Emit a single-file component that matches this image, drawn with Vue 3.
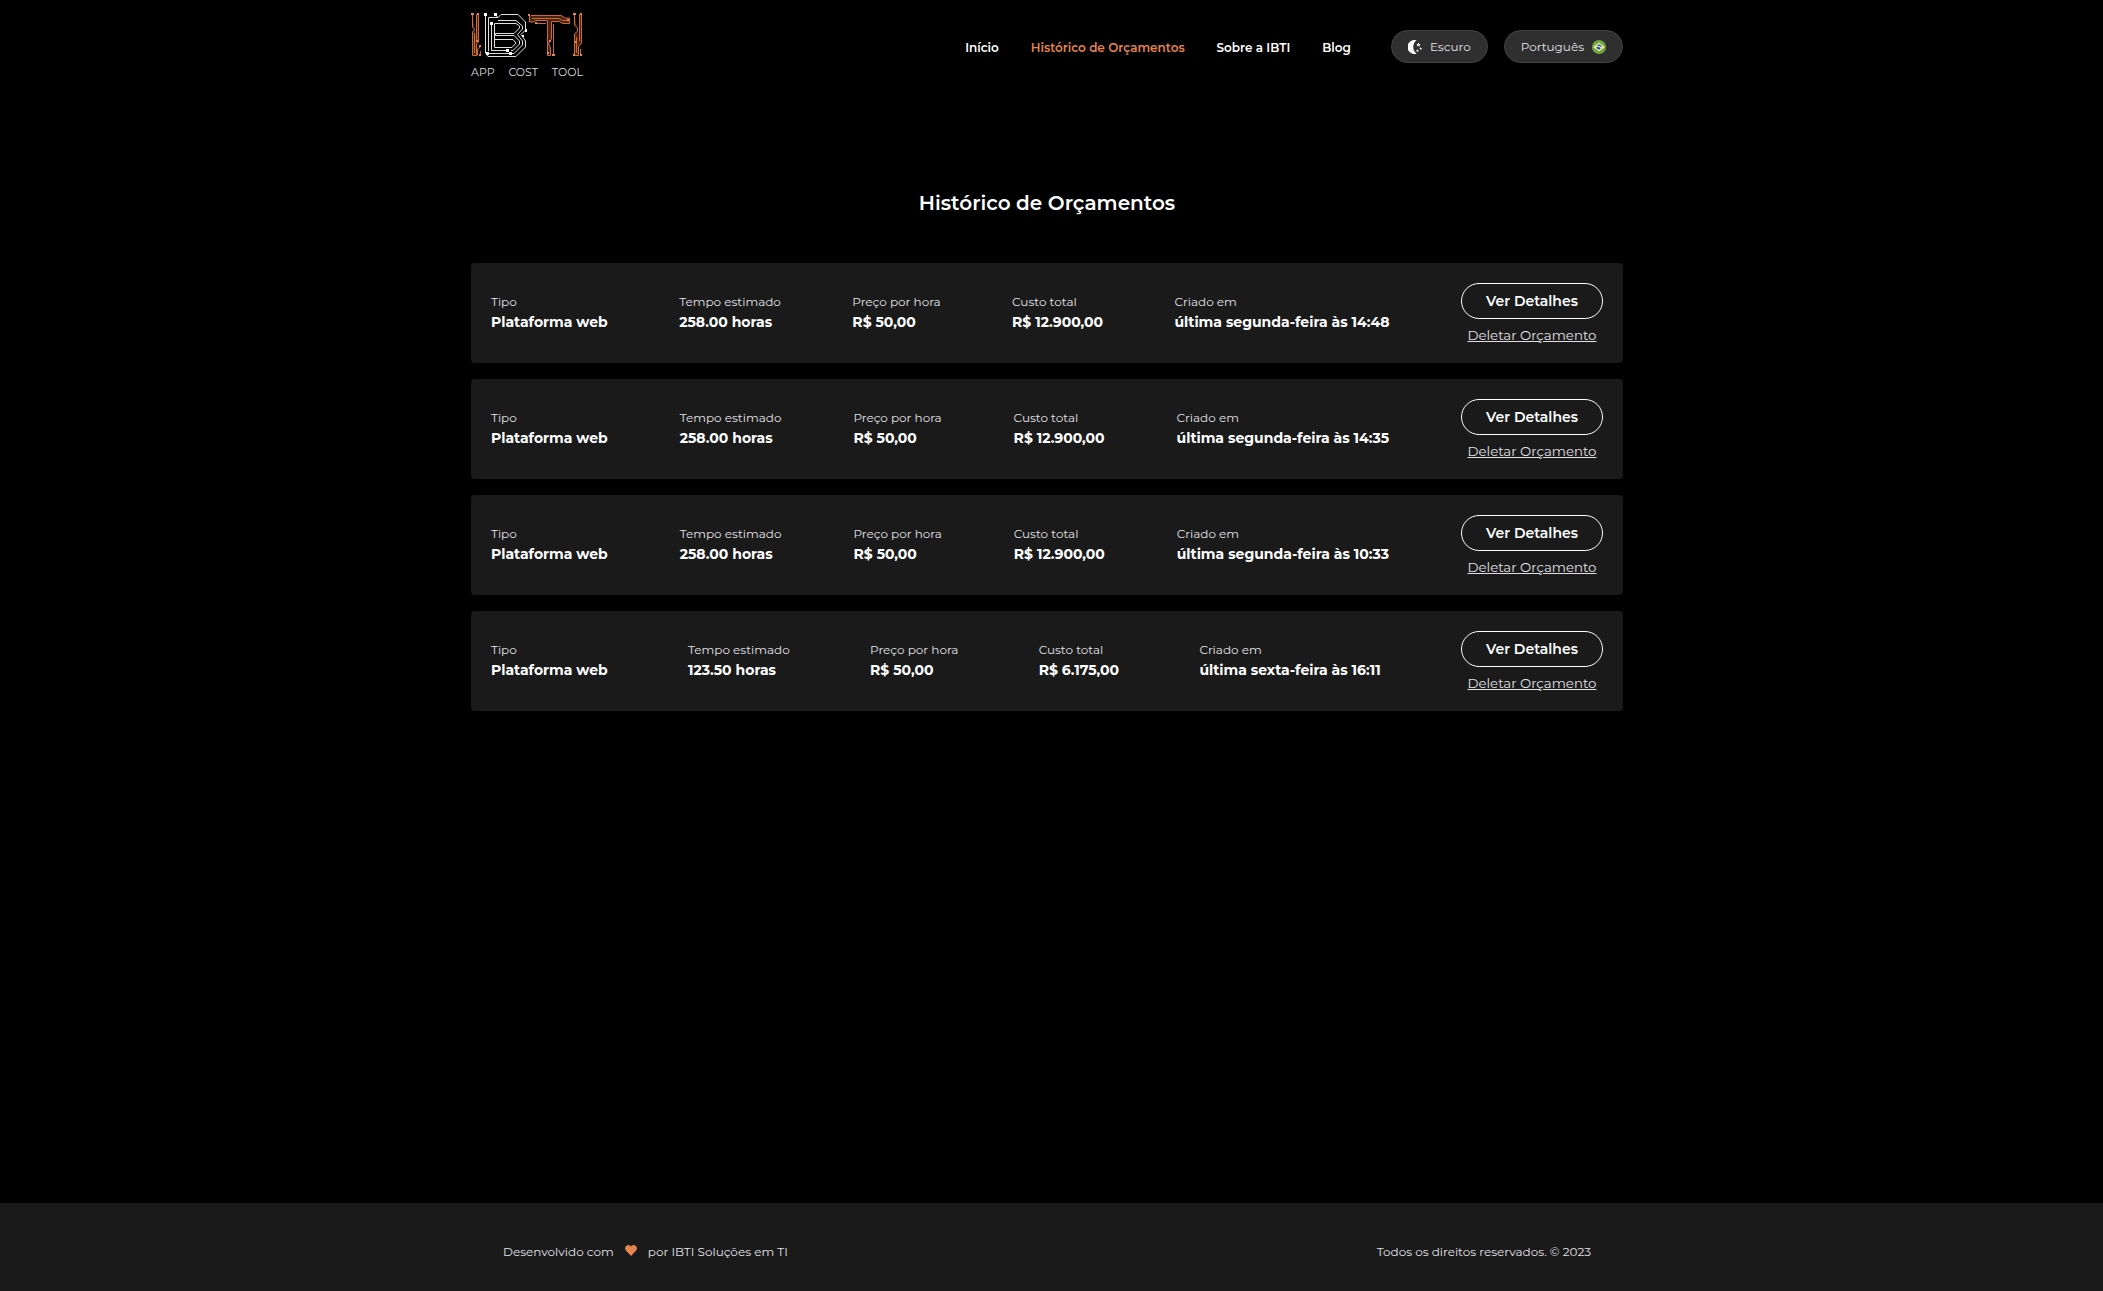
<script setup>
const links = [
  { label: 'Início' },
  { label: 'Histórico de Orçamentos', active: true },
  { label: 'Sobre a IBTI' },
  { label: 'Blog' },
]

const budget = (hours, total, created) => [
  { label: 'Tipo', value: 'Plataforma web' },
  { label: 'Tempo estimado', value: `${hours} horas` },
  { label: 'Preço por hora', value: 'R$ 50,00' },
  { label: 'Custo total', value: `R$ ${total}` },
  { label: 'Criado em', value: created },
]

const budgets = [
  budget('258.00', '12.900,00', 'última segunda-feira às 14:48'),
  budget('258.00', '12.900,00', 'última segunda-feira às 14:35'),
  budget('258.00', '12.900,00', 'última segunda-feira às 10:33'),
  budget('123.50', '6.175,00', 'última sexta-feira às 16:11'),
]
</script>

<template>
  <div class="page">
    <header class="header container">
      <a class="logo" href="#">
        <svg width="112" height="44" viewBox="0 0 112 44" fill="none" aria-hidden="true">
          <g stroke="#c96a38" stroke-width="1">
            <path fill="#4a2411" d="M1.500 1V14L3.500 16.500L1.500 19V42.500H5.500V31L7.500 29V1.500H5.500V27M3.500 20V40" />
            <path d="M6.500 42.500V36L9.500 34M9.500 42V38" />
            <path fill="#4a2411" d="M58.500 2V9H62L65 7.500H76.500V42.500H79.500V35L78 32V29L80.500 26V8.500H88L92 10.500H98.500V5H94L90 2.500H60" />
            <path d="M65 10.500H75M61 5.500H88L92 7.500H97M82.500 11V41" />
            <path fill="#4a2411" d="M103.500 1V12L106.500 15V18L103.500 21V42.500H107.500V34L110.500 30V1.500H108.500V28M105.500 24V40" />
            <path d="M109.500 42V36" />
          </g>
          <path fill="#e5844f" d="M0 0h3v2H0zM6 0h2v2H6zM5 27h2v2H5zM8 32h2v2H8zM8 41h2v2H8zM57 1h2v2h-2zM64 9h2v2h-2zM96 6h2v2h-2zM78 27h2v2h-2zM81 41h3v2h-3zM76 39h2v2h-2zM102 0h3v2h-3zM109 0h2v2h-2zM104 28h2v2h-2zM102 41h2v2h-2zM109 41h2v2h-2z" />
          <g stroke="#dedede" stroke-width="1">
            <path d="M14.500 2V40L17 43.500H45L54.500 34V28L50 21.500L54.500 17V9L47 1.500H30L27 4.500H17.500V38" />
            <path d="M27 7.500H45L51.500 13V16L46.500 21.500L51.500 28V32L43 40.500H18M20.500 12V37.500H36" />
            <path d="M40 37.500H42L48.500 31V28L43 22.500H24.500V20.500H43L48.500 15V13L45 10.500H23.500V34.500H41L45 30L42 26.500H24" />
            <path d="M24 1.500L27 4.500" />
          </g>
          <path fill="#fff" d="M13 0h3v3h-3zM23 0h3v3h-3zM19 9h3v3h-3zM54 16h2v3h-2zM51 22h2v2h-2zM35 36h3v3h-3zM15 39h3v3h-3zM38 39h3v3h-3z" />
        </svg>
        <span class="tagline"><span>APP</span> <span>COST</span> <span>TOOL</span></span>
      </a>

      <nav class="nav">
        <a v-for="link in links" :key="link.label" href="#" :class="{ active: link.active }">{{ link.label }}</a>
      </nav>

      <div class="settings">
        <button type="button" class="pill">
          <svg width="14" height="14" viewBox="0 0 14 14" fill="#fff" aria-hidden="true">
            <path d="M8.500 0.300A7 7 0 1 0 8.500 13.700A8.500 8.500 0 0 1 8.500 0.300Z" />
            <path d="M10.500 2.500l.6 1.500 1.600.1-1.200 1 .4 1.600-1.400-.9-1.400.9.4-1.600-1.200-1 1.600-.1zM12.700 7l.4.9 1 .1-.8.7.2 1-.8-.5-.9.5.3-1-.8-.7 1-.1zM9.500 9.200l.4.9 1 .1-.8.7.2 1-.8-.5-.9.5.3-1-.8-.7 1-.1z" />
          </svg>
          Escuro
        </button>
        <button type="button" class="pill">
          Português
          <svg width="14" height="14" viewBox="0 0 14 14" aria-hidden="true">
            <circle cx="7" cy="7" r="7" fill="#6da544" />
            <path d="M7 2.500L13 7L7 11.500L1 7Z" fill="#ffe07a" />
            <circle cx="7" cy="7" r="2.500" fill="#f0f0f0" />
            <path d="M5 6.800q2.500-.3 3.700 1.900A2.500 2.500 0 0 1 4.500 7.500ZM5 5.700A2.500 2.500 0 0 1 9.500 7.500Q8 5.500 5 5.700Z" fill="#0052b4" />
          </svg>
        </button>
      </div>
    </header>

    <main class="main container">
      <h1>Histórico de Orçamentos</h1>
      <ul class="list">
        <li v-for="(fields, i) in budgets" :key="i" class="card">
          <dl v-for="field in fields" :key="field.label">
            <dt>{{ field.label }}</dt>
            <dd>{{ field.value }}</dd>
          </dl>
          <div class="actions">
            <button type="button" class="details">Ver Detalhes</button>
            <button type="button" class="delete">Deletar Orçamento</button>
          </div>
        </li>
      </ul>
    </main>

    <footer class="footer">
      <div class="footer-inner container">
        <p>
          Desenvolvido com
          <svg width="12" height="11" viewBox="0 0 12 11" fill="#e5844f" role="img" aria-label="amor">
            <path d="M6 11L1 5.800C-.3 4.300-.2 2 1.100.9C2.500-.4 4.500-.2 5.600 1.100L6 1.600L6.400 1.100C7.500-.2 9.500-.4 10.900.9C12.200 2 12.300 4.300 11 5.800Z" />
          </svg>
          por IBTI Soluções em TI
        </p>
        <p>Todos os direitos reservados. © 2023</p>
      </div>
    </footer>
  </div>
</template>

<style>
body {
  background: #000;
}
</style>

<style scoped>
.page {
  --gutter: 9px;
  display: flex;
  flex-direction: column;
  min-height: 100vh;
  padding-right: var(--gutter);
  color: #fff;
  font-family: Montserrat, Inter, sans-serif;
  font-size: 12px;
}

.page * {
  box-sizing: border-box;
}

.container {
  width: 100%;
  max-width: 1152px;
  margin: 0 auto;
}

a {
  color: inherit;
  text-decoration: none;
}

button {
  color: inherit;
  font-family: inherit;
  cursor: pointer;
}

.header {
  display: flex;
  align-items: center;
  height: 93px;
}

.logo {
  display: flex;
  flex-direction: column;
  align-self: flex-start;
  gap: 8px;
  width: 112px;
  padding-top: 13px;
}

.tagline {
  display: flex;
  justify-content: space-between;
  color: #ddd;
  font-size: 11px;
  line-height: 14px;
}

.nav {
  display: flex;
  gap: 32px;
  margin: 0 40px 0 auto;
  padding-top: 1px;
  font-weight: 600;
}

.nav .active {
  color: #e5844f;
}

.settings {
  display: flex;
  gap: 16px;
}

.pill {
  display: flex;
  align-items: center;
  gap: 8px;
  height: 33px;
  padding: 0 16px;
  border: 1px solid #444;
  border-radius: 17px;
  background: #2f2f2f;
  color: #e1e1e6;
  font-size: 12px;
}

.main {
  flex: 1;
  padding-top: 95px;
}

h1 {
  margin: 0 0 45px;
  font-size: 20px;
  font-weight: 600;
  line-height: 30px;
  text-align: center;
}

.list {
  display: flex;
  flex-direction: column;
  gap: 16px;
  margin: 0;
  padding: 0;
  list-style: none;
}

.card {
  display: flex;
  align-items: center;
  justify-content: space-between;
  height: 100px;
  padding: 0 20px;
  border-radius: 4px;
  background: #1a1a1a;
}

dl {
  margin: 0;
  padding-bottom: 2px;
}

dt {
  color: #e1e1e6;
  line-height: 20px;
}

dd {
  margin: 0;
  font-size: 14px;
  font-weight: 700;
  line-height: 20px;
}

.actions {
  display: flex;
  flex-direction: column;
  align-items: center;
  gap: 8px;
}

.details {
  width: 142px;
  height: 36px;
  padding: 0;
  border: 1px solid #fff;
  border-radius: 18px;
  background: none;
  font-size: 14px;
  font-weight: 600;
}

.delete {
  padding: 0;
  border: 0;
  background: none;
  color: #e1e1e6;
  line-height: 16px;
  text-decoration: underline;
}

.footer {
  margin-right: calc(-1 * var(--gutter));
  padding-right: var(--gutter);
  background: #1a1a1a;
}

.footer-inner {
  display: flex;
  align-items: center;
  justify-content: space-between;
  height: 88px;
  padding: 8px 32px 0;
  color: #e1e1e6;
}

.footer p {
  display: flex;
  align-items: baseline;
  gap: 11px;
  margin: 0;
}
</style>
